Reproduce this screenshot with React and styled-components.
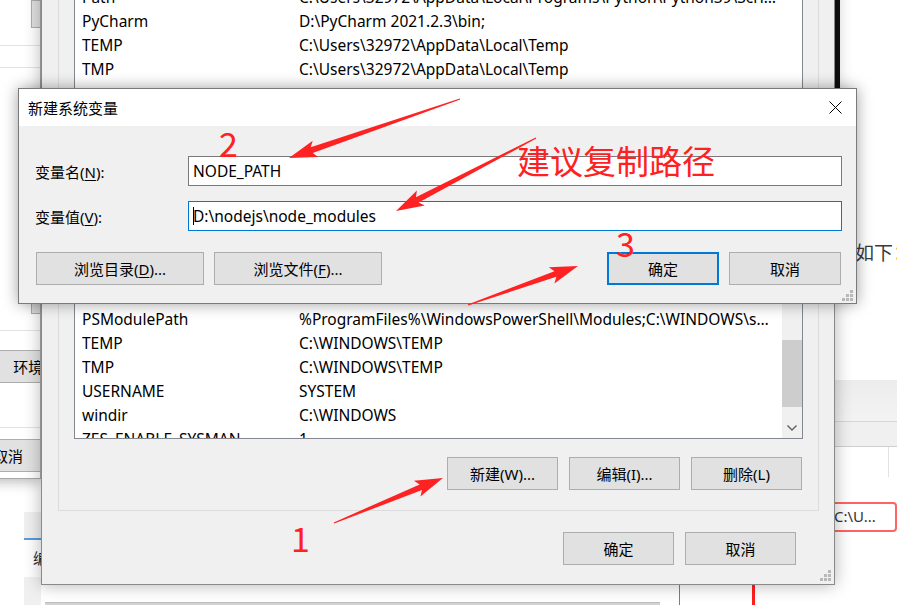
import React from "react";
import styled, { createGlobalStyle } from "styled-components";

const UI = `"Noto Sans", "Noto Sans CJK SC", sans-serif`;
const CJK = `"Noto Sans CJK SC", "Noto Sans", sans-serif`;

const Global = createGlobalStyle`
  html, body { margin: 0; padding: 0; background: #fff; }
  body { width: 897px; height: 605px; overflow: hidden; font-family: ${UI}; }
  #root { width: 897px; height: 605px; }
  * { box-sizing: border-box; }
`;

const Desktop = styled.div`
  position: relative;
  width: 897px;
  height: 605px;
  overflow: hidden;
  background: #fff;
`;

/* windows placed on the desktop canvas */
const Win = styled.div`
  position: absolute;
  left: ${(p) => p.$x}px;
  top: ${(p) => p.$y}px;
  width: ${(p) => p.$w}px;
  height: ${(p) => p.$h}px;
  z-index: ${(p) => p.$z};
  display: flex;
  flex-direction: column;
  overflow: hidden;
`;

/* ---------- background page (right side) ---------- */
const BrowserWin = styled(Win)`
  background: #fff;
  overflow: visible;
`;
const DarkEdge = styled.div`
  margin-left: 193px;
  width: 6px;
  height: 88px;
  background: #111;
`;
const NoteLine = styled.div`
  margin-top: 154px;
  height: 20px;
  line-height: 20px;
  padding-left: 176px;
  font-family: ${CJK};
  font-size: 19px;
  color: #3a3a3a;
  white-space: nowrap;
`;
const Colon = styled.span`
  color: #f5a623;
`;
const PageBand = styled.div`
  margin-top: 118px;
  margin-left: 193px;
  height: 42px;
  background: linear-gradient(#ececec, #f3f3f3);
`;
const PageBar = styled.div`
  margin-left: 193px;
  height: 26px;
  background: #f0f0f0;
  border-top: 1px solid #d6d6d6;
  border-bottom: 1px solid #cfcfcf;
`;
const PageCell = styled.div`
  margin-left: 193px;
  width: 55px;
  height: 30px;
  border-right: 1px solid #e2e2e2;
`;
const RedBox = styled.div`
  margin-top: 25px;
  margin-left: 139px;
  width: 117px;
  height: 30px;
  border: 2px solid #ff6464;
  border-radius: 4px;
  padding-left: 52px;
  line-height: 25px;
  font-size: 15px;
  color: #333;
  white-space: nowrap;
  background: #fff;
`;
const BottomMarks = styled.div`
  margin-top: 52px;
  height: 21px;
  display: flex;
`;
const VMark = styled.div`
  margin-left: ${(p) => p.$ml}px;
  width: ${(p) => p.$w}px;
  background: ${(p) => p.$c};
`;

const LowerStrip = styled(Win)`
  background: #d3d3d3;
  border-top: 1px solid #bdbdbd;
`;

/* ---------- window behind, lower left ---------- */
const EditWin = styled(Win)`
  background: #fff;
`;
const EditHeader = styled.div`
  flex: none;
  height: 28px;
  background: #f0f0f0;
  border-bottom: 2px solid #5b9bd5;
`;
const EditRow = styled.div`
  flex: none;
  height: 37px;
  padding: 8px 0 0 9px;
  font-family: ${CJK};
  font-size: 15px;
  line-height: 20px;
  color: #222;
  white-space: nowrap;
`;
const EditFooter = styled.div`
  flex: 1;
  background: #f0f0f0;
`;

/* ---------- system properties sliver (left) ---------- */
const SysWin = styled(Win)`
  background: #fff;
  border: 1px solid #a8a8a8;
  box-shadow: 0 3px 12px rgba(0, 0, 0, 0.28);
`;
const SysRule = styled.div`
  margin-top: ${(p) => p.$mt}px;
  height: 1px;
  background: #e3e3e3;
  flex: none;
`;
const SysBtn = styled.div`
  flex: none;
  margin-top: ${(p) => p.$mt}px;
  margin-left: ${(p) => p.$ml}px;
  width: ${(p) => p.$w}px;
  height: ${(p) => p.$h}px;
  background: #e1e1e1;
  border: 1px solid #adadad;
  display: flex;
  align-items: center;
  justify-content: center;
  font-family: ${CJK};
  font-size: 15px;
  color: #000;
  white-space: nowrap;
`;

/* ---------- environment variables window ---------- */
const EnvWin = styled(Win)`
  background: #f0f0f0;
  border: 1px solid #8a8a8a;
  box-shadow: 0 0 16px rgba(0, 0, 0, 0.3);
`;
const Group = styled.div`
  flex: none;
  margin: ${(p) => p.$mt}px 15px 0 16px;
  border: 1px solid #dcdcdc;
  padding: 0 15px ${(p) => p.$pb}px 15px;
  display: flex;
  flex-direction: column;
`;
const ListBox = styled.div`
  margin-top: ${(p) => p.$mt}px;
  height: ${(p) => p.$h}px;
  background: #fff;
  border: 1px solid #828790;
  display: flex;
  overflow: hidden;
`;
const Rows = styled.div`
  flex: 1;
  overflow: hidden;
`;
const Row = styled.div`
  display: flex;
  height: 24px;
  line-height: 24px;
  padding-left: 7px;
  white-space: nowrap;
  font-family: ${UI};
  font-size: 15.5px;
  color: #000;
`;
const NameCell = styled.span`
  flex: none;
  width: 217px;
  overflow: hidden;
`;
const ValueCell = styled.span`
  flex: none;
  width: 477px;
  overflow: hidden;
  text-overflow: ellipsis;
`;
const VScroll = styled.div`
  flex: none;
  width: 20px;
  background: #f0f0f0;
  display: flex;
  flex-direction: column;
`;
const Thumb = styled.div`
  margin-top: 81px;
  height: 67px;
  background: #cdcdcd;
`;
const ScrollGap = styled.div`
  flex: 1;
`;
const ScrollArrow = styled.div`
  height: 20px;
  display: flex;
  align-items: center;
  justify-content: center;
`;
const BtnRow = styled.div`
  flex: none;
  margin-top: ${(p) => p.$mt}px;
  display: flex;
  justify-content: ${(p) => p.$justify || "flex-end"};
  gap: ${(p) => p.$gap || 11}px;
  padding: ${(p) => p.$pad || "0"};
`;
const Btn = styled.div`
  flex: none;
  width: ${(p) => p.$w}px;
  height: 33px;
  background: #e1e1e1;
  border: ${(p) => (p.$primary ? "2px solid #0078d7" : "1px solid #adadad")};
  display: flex;
  align-items: center;
  justify-content: center;
  font-family: ${UI};
  font-size: 15px;
  color: #000;
  white-space: nowrap;
  u {
    text-decoration: underline;
    text-underline-offset: 2px;
  }
`;
const BtnGroup = styled.div`
  display: flex;
  gap: 10px;
`;
const Legend = styled.div`
  position: absolute;
  margin: -10px 0 0 -6px;
  padding: 0 4px;
  background: #f0f0f0;
  font-family: ${CJK};
  font-size: 15px;
`;
const Grip = styled.svg`
  position: absolute;
  right: 2px;
  bottom: 2px;
`;

/* ---------- new system variable dialog ---------- */
const Dialog = styled(Win)`
  background: #f0f0f0;
  border: 1px solid #7a7a7a;
  box-shadow: 0 0 14px rgba(0, 0, 0, 0.38);
`;
const TitleBar = styled.div`
  flex: none;
  height: 37px;
  background: #fff;
  display: flex;
  align-items: center;
  justify-content: space-between;
  padding: 0 14px 0 9px;
  font-family: ${CJK};
  font-size: 15px;
  color: #000;
`;
const DlgBody = styled.div`
  flex: 1;
  padding: 30px 14px 19px 16px;
  display: flex;
  flex-direction: column;
  position: relative;
`;
const Field = styled.div`
  display: flex;
  align-items: center;
  margin-top: ${(p) => p.$mt}px;
`;
const Label = styled.div`
  width: 153px;
  font-family: ${UI};
  font-size: 15px;
  color: #000;
  white-space: nowrap;
  u {
    text-decoration: underline;
    text-underline-offset: 2px;
  }
`;
const Input = styled.div`
  flex: 1;
  height: 30px;
  background: #fff;
  border: 1px solid ${(p) => (p.$focus ? "#0078d7" : "#7a7a7a")};
  padding-left: 4px;
  display: flex;
  align-items: center;
  font-family: ${UI};
  font-size: 15.5px;
  color: #000;
  white-space: nowrap;
`;
const Caret = styled.span`
  display: inline-block;
  width: 1px;
  height: 18px;
  background: #000;
  margin-right: -1px;
`;

/* ---------- annotations ---------- */
const Overlay = styled.svg`
  position: absolute;
  left: 0;
  top: 0;
  z-index: 20;
  pointer-events: none;
`;
const Mark = styled.div`
  position: absolute;
  left: ${(p) => p.$x}px;
  top: ${(p) => p.$y}px;
  z-index: 21;
  font-family: ${CJK};
  font-size: ${(p) => p.$s}px;
  line-height: 1;
  color: #ff2121;
  white-space: nowrap;
`;

function arrowPts(tx, ty, hx, hy, shaft = 6, headW = 17, headL = 24) {
  const dx = hx - tx;
  const dy = hy - ty;
  const L = Math.hypot(dx, dy);
  const ux = dx / L;
  const uy = dy / L;
  const nx = -uy;
  const ny = ux;
  const bx = hx - ux * headL;
  const by = hy - uy * headL;
  const bbx = hx - ux * (headL + 4);
  const bby = hy - uy * (headL + 4);
  const p = [
    [tx + nx * 0.6, ty + ny * 0.6],
    [bx + nx * (shaft / 2), by + ny * (shaft / 2)],
    [bbx + nx * (headW / 2), bby + ny * (headW / 2)],
    [hx, hy],
    [bbx - nx * (headW / 2), bby - ny * (headW / 2)],
    [bx - nx * (shaft / 2), by - ny * (shaft / 2)],
    [tx - nx * 0.6, ty - ny * 0.6],
  ];
  return p.map((q) => q.map((v) => v.toFixed(1)).join(",")).join(" ");
}

const userRows = [
  ["Path", "C:\\Users\\32972\\AppData\\Local\\Programs\\Python\\Python39\\Scripts\\;C:\\Users\\32972\\AppData\\Local\\Programs\\Python\\Python39\\"],
  ["PyCharm", "D:\\PyCharm 2021.2.3\\bin;"],
  ["TEMP", "C:\\Users\\32972\\AppData\\Local\\Temp"],
  ["TMP", "C:\\Users\\32972\\AppData\\Local\\Temp"],
];
const sysRows = [
  ["PROCESSOR_LEVEL", "6"],
  ["PROCESSOR_REVISION", "a505"],
  ["PSModulePath", "%ProgramFiles%\\WindowsPowerShell\\Modules;C:\\WINDOWS\\system32\\WindowsPowerShell\\v1.0\\Modules"],
  ["TEMP", "C:\\WINDOWS\\TEMP"],
  ["TMP", "C:\\WINDOWS\\TEMP"],
  ["USERNAME", "SYSTEM"],
  ["windir", "C:\\WINDOWS"],
  ["ZES_ENABLE_SYSMAN", "1"],
];

const GripIcon = () => (
  <Grip width="12" height="12" viewBox="0 0 12 12">
    <g fill="#b8b8b8">
      <rect x="8" y="0" width="3" height="3" />
      <rect x="4" y="4" width="3" height="3" />
      <rect x="8" y="4" width="3" height="3" />
      <rect x="0" y="8" width="3" height="3" />
      <rect x="4" y="8" width="3" height="3" />
      <rect x="8" y="8" width="3" height="3" />
    </g>
  </Grip>
);

export default function App() {
  return (
    <Desktop>
      <Global />

      <BrowserWin $x={641} $y={0} $w={256} $h={605} $z={1}>
        <DarkEdge />
        <NoteLine>
          配置如下<Colon>：</Colon>
        </NoteLine>
        <PageBand />
        <PageBar />
        <PageCell />
        <RedBox>C:\U...</RedBox>
        <BottomMarks>
          <VMark $ml={38} $w={1} $c="#3c8dde" />
          <VMark $ml={72} $w={3} $c="#ff2020" />
        </BottomMarks>
      </BrowserWin>

      <LowerStrip $x={45} $y={602} $w={615} $h={10} $z={2} />

      <EditWin $x={24} $y={512} $w={17} $h={100} $z={2}>
        <EditHeader />
        <EditRow>编辑</EditRow>
        <EditFooter />
      </EditWin>

      <SysWin $x={-259} $y={-1} $w={300} $h={480} $z={3}>
        <SysBtn $mt={0} $ml={289} $w={100} $h={28} />
        <SysRule $mt={17} />
        <SysRule $mt={21} />
        <SysBtn $mt={213} $ml={289} $w={100} $h={33} />
        <SysRule $mt={16} />
        <SysBtn $mt={19} $ml={248} $w={140} $h={33}>环境变量(N)...</SysBtn>
        <SysRule $mt={44} />
        <SysBtn $mt={11} $ml={211} $w={110} $h={33}>取消</SysBtn>
      </SysWin>

      <EnvWin $x={41} $y={-40} $w={794} $h={625} $z={4}>
        <Group $mt={0} $pb={15}>
          <ListBox $mt={22} $h={166}>
            <Rows>
              {userRows.map(([n, v]) => (
                <Row key={n}>
                  <NameCell>{n}</NameCell>
                  <ValueCell>{v}</ValueCell>
                </Row>
              ))}
            </Rows>
          </ListBox>
          <BtnRow $mt={16} $pad="0 1px 0 0">
            <Btn $w={111}>新建(N)...</Btn>
            <Btn $w={111}>编辑(E)...</Btn>
            <Btn $w={111}>删除(D)</Btn>
          </BtnRow>
        </Group>
        <Group $mt={20} $pb={20}>
          <Legend>系统变量(S)</Legend>
          <ListBox $mt={22} $h={181}>
            <Rows>
              {sysRows.map(([n, v]) => (
                <Row key={n}>
                  <NameCell>{n}</NameCell>
                  <ValueCell>{v}</ValueCell>
                </Row>
              ))}
            </Rows>
            <VScroll>
              <Thumb />
              <ScrollGap />
              <ScrollArrow>
                <svg width="10" height="6" viewBox="0 0 10 6">
                  <path d="M0.5 0.5 L5 5 L9.5 0.5" fill="none" stroke="#606060" strokeWidth="1.4" />
                </svg>
              </ScrollArrow>
            </VScroll>
          </ListBox>
          <BtnRow $mt={18} $pad="0 1px 0 0">
            <Btn $w={111}>新建(W)...</Btn>
            <Btn $w={111}>编辑(I)...</Btn>
            <Btn $w={111}>删除(L)</Btn>
          </BtnRow>
        </Group>
        <BtnRow $mt={21} $pad="0 38px 0 0">
          <Btn $w={111}>确定</Btn>
          <Btn $w={111}>取消</Btn>
        </BtnRow>
        <GripIcon />
      </EnvWin>

      <Dialog $x={18} $y={88} $w={839} $h={216} $z={5}>
        <TitleBar>
          <span>新建系统变量</span>
          <svg width="13" height="13" viewBox="0 0 13 13">
            <path d="M0.5 0.5 L12.5 12.5 M12.5 0.5 L0.5 12.5" stroke="#000" strokeWidth="1" />
          </svg>
        </TitleBar>
        <DlgBody>
          <Field $mt={0}>
            <Label>
              变量名(<u>N</u>):
            </Label>
            <Input>NODE_PATH</Input>
          </Field>
          <Field $mt={15}>
            <Label>
              变量值(<u>V</u>):
            </Label>
            <Input $focus>
              <Caret />
              D:\nodejs\node_modules
            </Input>
          </Field>
          <BtnRow $mt={21} $justify="space-between" $pad="0 1px 0 1px">
            <BtnGroup>
              <Btn $w={168}>
                浏览目录(<u>D</u>)...
              </Btn>
              <Btn $w={168}>
                浏览文件(<u>F</u>)...
              </Btn>
            </BtnGroup>
            <BtnGroup>
              <Btn $w={112} $primary>确定</Btn>
              <Btn $w={112}>取消</Btn>
            </BtnGroup>
          </BtnRow>
          <GripIcon />
        </DlgBody>
      </Dialog>

      <Overlay width="897" height="605" viewBox="0 0 897 605">
        <g fill="#ff2222">
          <polygon points={arrowPts(460, 99, 289, 158)} />
          <polygon points={arrowPts(536, 138, 396, 211)} />
          <polygon points={arrowPts(468, 305, 578, 266)} />
          <polygon points={arrowPts(334, 523, 443, 478)} />
        </g>
      </Overlay>
      <Mark $x={219} $y={126} $s={34}>2</Mark>
      <Mark $x={517} $y={144} $s={33}>建议复制路径</Mark>
      <Mark $x={616} $y={226} $s={34}>3</Mark>
      <Mark $x={291} $y={521} $s={34}>1</Mark>
    </Desktop>
  );
}
